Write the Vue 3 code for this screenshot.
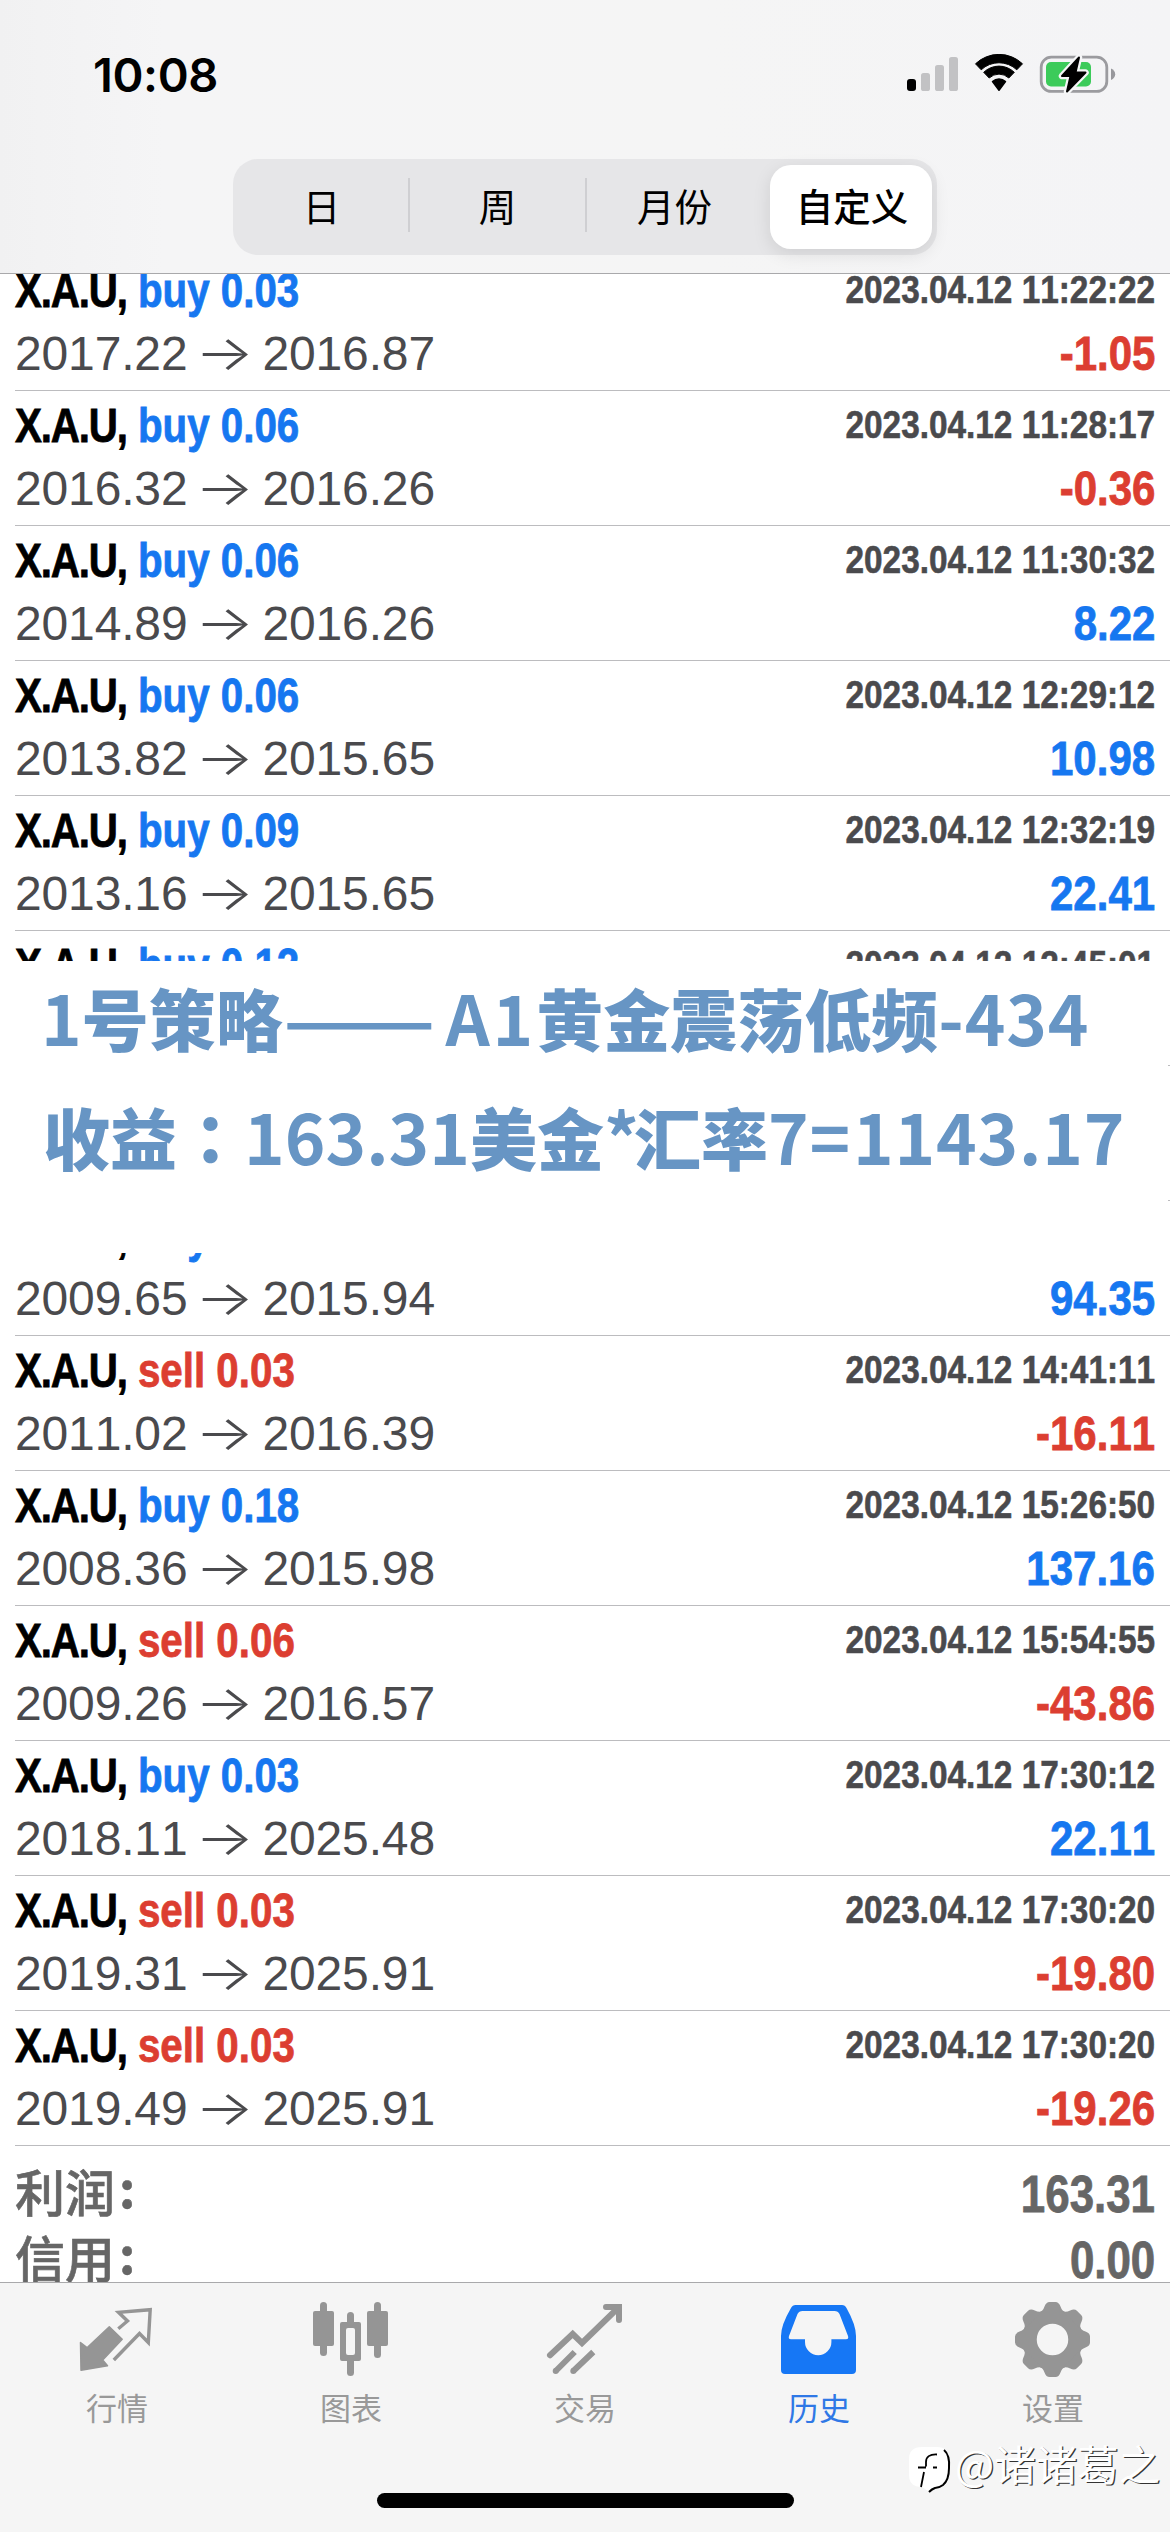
<script setup>
const periods = ['日', '周', '月份', '自定义']
const activePeriod = 3

const deals = [
  { side: 'buy', lot: '0.03', from: '2017.22', to: '2016.87', time: '2023.04.12 11:22:22', profit: '-1.05' },
  { side: 'buy', lot: '0.06', from: '2016.32', to: '2016.26', time: '2023.04.12 11:28:17', profit: '-0.36' },
  { side: 'buy', lot: '0.06', from: '2014.89', to: '2016.26', time: '2023.04.12 11:30:32', profit: '8.22' },
  { side: 'buy', lot: '0.06', from: '2013.82', to: '2015.65', time: '2023.04.12 12:29:12', profit: '10.98' },
  { side: 'buy', lot: '0.09', from: '2013.16', to: '2015.65', time: '2023.04.12 12:32:19', profit: '22.41' },
  { side: 'buy', lot: '0.12', time: '2023.04.12 12:45:01' },
  {},
  { side: 'buy', from: '2009.65', to: '2015.94', profit: '94.35' },
  { side: 'sell', lot: '0.03', from: '2011.02', to: '2016.39', time: '2023.04.12 14:41:11', profit: '-16.11' },
  { side: 'buy', lot: '0.18', from: '2008.36', to: '2015.98', time: '2023.04.12 15:26:50', profit: '137.16' },
  { side: 'sell', lot: '0.06', from: '2009.26', to: '2016.57', time: '2023.04.12 15:54:55', profit: '-43.86' },
  { side: 'buy', lot: '0.03', from: '2018.11', to: '2025.48', time: '2023.04.12 17:30:12', profit: '22.11' },
  { side: 'sell', lot: '0.03', from: '2019.31', to: '2025.91', time: '2023.04.12 17:30:20', profit: '-19.80' },
  { side: 'sell', lot: '0.03', from: '2019.49', to: '2025.91', time: '2023.04.12 17:30:20', profit: '-19.26' },
]

const totals = [
  { label: '利润', value: '163.31' },
  { label: '信用', value: '0.00' },
]

const teeth = [0, 45, 90, 135, 180, 225, 270, 315]
</script>

<template>
  <div class="screen">
    <header class="header">
      <div class="status">
        <span class="clock">10:08</span>
        <svg class="status-icons" width="212" height="40" viewBox="0 0 212 40">
          <rect x="1" y="25" width="9" height="12" rx="3" fill="#000" />
          <rect x="15" y="19" width="9" height="18" rx="2.6" fill="#c2c2c4" />
          <rect x="29" y="11" width="9" height="26" rx="2.6" fill="#c2c2c4" />
          <rect x="43" y="3" width="9" height="34" rx="2.6" fill="#c2c2c4" />
          <path d="M69.500 9.800a34 34 0 0 1 47 0l-5.700 6a26 26 0 0 0-35.600 0z" fill="#000" stroke="#000" stroke-width="1" stroke-linejoin="round" />
          <path d="M77.700 18.300a22 22 0 0 1 30.600 0l-5.500 5.700a14.300 14.300 0 0 0-19.600 0z" fill="#000" stroke="#000" stroke-width="1" stroke-linejoin="round" />
          <path d="M86.500 27.500a10 10 0 0 1 13 0l-6.500 8.800z" fill="#000" stroke="#000" stroke-width="1.500" stroke-linejoin="round" />
          <rect x="135.200" y="3.200" width="65.600" height="34.200" rx="10" fill="none" stroke="#9b9b9f" stroke-width="2.800" />
          <path d="M205 14.500q4.200 2 4.200 5.800t-4.200 5.800z" fill="#98989c" />
          <rect x="140" y="8" width="45" height="24.500" rx="5" fill="#3ccb5a" />
          <path d="M173 3.500L156 22h8.500l-3.500 15.500L179.500 18.500H169.500z" fill="#000" stroke="#f6f7f8" stroke-width="6.500" stroke-linejoin="round" />
          <path d="M173 3.500L156 22h8.500l-3.500 15.500L179.500 18.500H169.500z" fill="#000" stroke="#000" stroke-width="2" stroke-linejoin="round" />
        </svg>
      </div>
      <nav class="segments">
        <button v-for="(p, i) in periods" :key="p" class="segment" :class="{ active: i === activePeriod }">
          <span>{{ p }}</span>
        </button>
      </nav>
    </header>

    <main class="history">
      <ul class="deals">
        <li v-for="(d, i) in deals" :key="i" class="deal">
          <div class="line top">
            <span v-if="d.side" class="title"><span class="symbol">X.A.U,</span> <span :class="d.side">{{ d.side }} {{ d.lot }}</span></span>
            <span v-if="d.time" class="time">{{ d.time }}</span>
          </div>
          <div v-if="d.from" class="line bottom">
            <span class="prices">{{ d.from }}<span class="arrow">→</span>{{ d.to }}</span>
            <span class="profit" :class="d.profit.startsWith('-') ? 'loss' : 'gain'">{{ d.profit }}</span>
          </div>
        </li>
      </ul>
      <dl class="totals">
        <div v-for="t in totals" :key="t.label" class="total">
          <dt>{{ t.label }}<span class="colon">:</span></dt>
          <dd>{{ t.value }}</dd>
        </div>
      </dl>
      <div class="note">
        <p>1<b>号策略</b><i>——</i> <span class="code">A1</span><b>黄金震荡低频</b><span class="number">-434</span></p>
        <p class="income"><b>收益<span class="wide-colon">：</span></b>163.31<b>美金</b><span class="times">*</span><b>汇率</b><span class="number">7<span class="equals">=</span>1143.17</span></p>
      </div>
    </main>

    <footer class="tabbar">
      <div class="tabs">
        <div class="tab">
          <svg width="90" height="90" viewBox="0 0 90 90">
            <path d="M8.500 52.500L15 57.700 37.300 36.800 50.200 49.300 30.700 70 35.500 75.800 9 80.200z" fill="#959595" stroke="#959595" stroke-width="1.500" stroke-linejoin="round" />
            <path d="M46.300 38.700L55.500 31 46.500 22.300 78.200 19.700 76.300 52.500 67.500 43.500 41.800 70" fill="none" stroke="#959595" stroke-width="3.400" />
          </svg>
          <span>行情</span>
        </div>
        <div class="tab">
          <svg width="90" height="90" viewBox="0 0 90 90" fill="#959595">
            <rect x="7" y="21" width="21" height="35" rx="2" />
            <rect x="14" y="12" width="7" height="54" rx="3.500" />
            <path fill-rule="evenodd" d="M36 32H53q2 0 2 2V69q0 2-2 2H36q-2 0-2-2V34q0-2 2-2zM42 38q-2 0-2 2V63q0 2 2 2h5q2 0 2-2V40q0-2-2-2z" />
            <rect x="41" y="22" width="7" height="14" rx="3.500" />
            <rect x="41" y="67" width="7" height="19" rx="3.500" />
            <rect x="61" y="21" width="21" height="35" rx="2" />
            <rect x="68" y="12" width="7" height="56" rx="3.500" />
          </svg>
          <span>图表</span>
        </div>
        <div class="tab">
          <svg width="90" height="90" viewBox="0 0 90 90" fill="none" stroke="#959595" stroke-width="6">
            <path d="M10 65.300L32.700 44 42 53 78.500 17.500" stroke-linecap="round" />
            <path d="M66 17H79V30" stroke-linecap="round" />
            <path d="M15.700 81L34.700 62M33.300 81L53.300 62" />
            <path d="M15.700 81h0M33.300 81h0" stroke-linecap="round" />
          </svg>
          <span>交易</span>
        </div>
        <div class="tab current">
          <svg width="90" height="90" viewBox="0 0 90 90" fill="#1677f5">
            <path fill-rule="evenodd" d="M21.500 15H68q3 0 4.500 3Q82 35 82 46V80q0 4-4 4H11q-4 0-4-4V46Q7 35 17 18q1.500-3 4.500-3zM28.500 21q-3.500 0-5 3L15 46q-1 3.300 2 3.300H31V52a13.200 13.200 0 0 0 26.400 0V49.300H72q3 0 2-3.300L65.500 24q-1.500-3-5-3z" />
          </svg>
          <span>历史</span>
        </div>
        <div class="tab">
          <svg width="90" height="90" viewBox="0 0 90 90">
            <g transform="translate(44.500 49.500)" fill="#959595">
              <circle r="23" fill="none" stroke="#959595" stroke-width="14.500" />
              <path v-for="a in teeth" :key="a" :transform="`rotate(${a})`" d="M-13-27Q-9.500-28.500-8-33-6.300-37.500-3-37.500H3Q6.300-37.500 8-33 9.500-28.500 13-27z" />
            </g>
          </svg>
          <span>设置</span>
        </div>
      </div>
      <div class="home"></div>
      <div class="watermark">
        <svg width="47" height="50" viewBox="0 0 47 50">
          <path d="M14 1H29Q41 1 41 13V30Q41 41 29 41 24 41 20 45L14 41Q1 41 1 29V13Q1 1 14 1z" fill="#fff" />
          <path d="M36 4Q42 9 41 22 41 34 35 39 31 42 27 42 24 43 21 46" fill="none" stroke="#000" stroke-width="2" />
          <path d="M29 8.500Q18 8 18 16V20.500M18 21.500H10M16 26L13 41M25 21.500H29" fill="none" stroke="#000" stroke-width="1.800" />
        </svg>
        <span>@诸诸葛之</span>
      </div>
    </footer>
  </div>
</template>

<style>
body {
  background: #fff;
}
</style>

<style scoped>
.screen {
  width: 1170px;
  height: 2532px;
  display: flex;
  flex-direction: column;
  overflow: hidden;
  background: #fff;
  font-family: "Liberation Sans", "Noto Sans CJK SC", sans-serif;
}
.header {
  height: 274px;
  box-sizing: border-box;
  border-bottom: 1px solid #a9a9ab;
  background: linear-gradient(90deg, #f1f1f2 0, #f5f5f6 14%, #f5f5f5 60%, #f4f4f6 100%);
}
.status {
  display: flex;
  justify-content: space-between;
  padding: 54px 52px 0 93px;
  height: 105px;
  box-sizing: border-box;
}
.clock {
  font: 600 47px/41px Inter, sans-serif;
  letter-spacing: -0.4px;
}
.segments {
  display: grid;
  grid-template-columns: 175px 177px 177px 175px;
  width: 704px;
  height: 96px;
  margin: 54px auto 0;
  border-radius: 25px;
  background: #e6e6e8;
}
.segment {
  display: flex;
  align-items: center;
  padding: 0 0 4px;
  border: 0;
  background: none;
  color: #000;
  font: 400 37.500px/54px "Noto Sans CJK SC", sans-serif;
}
.segment span {
  flex: 1;
  border-left: 2px solid transparent;
}
.segment:nth-child(2) span,
.segment:nth-child(3) span {
  border-left-color: #cfcfd2;
}
.segment.active {
  margin: 6px 5px 6px 8px;
  border-radius: 21px;
  background: #fff;
  box-shadow: 0 5px 18px rgba(0, 0, 0, 0.1);
  font-weight: 500;
}
.history {
  position: relative;
  height: 2008px;
  overflow: hidden;
}
.deals {
  list-style: none;
  margin: -18px 0 0;
  padding: 0 0 0 15px;
}
.deal {
  height: 135px;
  box-sizing: border-box;
  border-bottom: 1px solid #bcbcbf;
  padding-right: 15px;
}
.line {
  display: flex;
  justify-content: space-between;
  white-space: nowrap;
}
.top {
  height: 68px;
}
.title {
  font-weight: 700;
  font-size: 48px;
  line-height: 70px;
  transform: scaleX(0.84);
  transform-origin: left;
  color: #000;
  -webkit-text-stroke: 0.8px currentColor;
}
.symbol {
  letter-spacing: -1.400px;
}
.time {
  margin-left: auto;
  font-weight: 700;
  font-size: 39px;
  line-height: 67px;
  transform: scaleX(0.855);
  transform-origin: right;
  color: #4a4a4d;
  font-kerning: none;
  -webkit-text-stroke: 0.6px currentColor;
}
.prices {
  font-size: 48px;
  line-height: 59px;
  letter-spacing: -0.150px;
  font-kerning: none;
  color: #4a4a4d;
}
.arrow {
  display: inline-block;
  width: 75px;
  text-align: center;
  font-family: Inter, sans-serif;
  font-weight: 300;
  line-height: 50px;
  transform: scaleX(1.29);
}
.profit {
  font-weight: 700;
  font-size: 48px;
  line-height: 59px;
  transform: scaleX(0.875);
  transform-origin: right;
  font-kerning: none;
  -webkit-text-stroke: 0.8px currentColor;
}
.buy,
.gain {
  color: #1677f0;
}
.sell,
.loss {
  color: #dc3e31;
}
.totals {
  margin: 0;
  padding: 14px 15px 0;
}
.total {
  display: flex;
  justify-content: space-between;
  height: 66px;
  color: #666;
}
.total dt {
  font: 500 50px/61px "Noto Sans CJK SC", sans-serif;
  -webkit-text-stroke: 0.6px currentColor;
}
.colon {
  position: relative;
  left: 4px;
  top: -4px;
  font-weight: 700;
}
.total dd {
  margin: 0;
  font-weight: 700;
  font-size: 51px;
  line-height: 70px;
  transform: scaleX(0.86);
  transform-origin: right;
  font-kerning: none;
  -webkit-text-stroke: 0.8px currentColor;
}
.note {
  position: absolute;
  left: 0;
  top: 687px;
  width: 1168px;
  height: 292px;
  background: #fff;
  color: #6795c4;
}
.note p {
  margin: 0;
  padding-left: 41px;
  height: 118.500px;
  font: 700 69px/111px "Noto Sans CJK SC", sans-serif;
  white-space: nowrap;
}
.note b {
  font-size: 67px;
  line-height: 100px;
}
.note .income {
  padding-left: 43px;
}
.note i {
  display: inline-block;
  width: 147px;
  font-style: normal;
  line-height: 100px;
  transform: scaleX(1.3);
  transform-origin: left;
}
.code {
  letter-spacing: 3px;
}
.number {
  letter-spacing: 0.8px;
}
.times {
  margin-right: -5px;
}
.equals {
  margin-right: 2px;
}
.wide-colon {
  font-family: "Noto Sans CJK TC", sans-serif;
}
.tabbar {
  position: relative;
  flex: 1;
  border-top: 1px solid #a9a9ab;
  background: #f5f5f5;
}
.tabs {
  display: flex;
  padding-top: 7px;
}
.tab {
  flex: 1;
  display: flex;
  flex-direction: column;
  align-items: center;
  color: #999;
  font: 400 31px/40px "Noto Sans CJK SC", sans-serif;
}
.tab span {
  margin-top: 7px;
}
.tab.current {
  color: #2f78e6;
}
.home {
  width: 417px;
  height: 15px;
  margin: 66px auto 0;
  border-radius: 8px;
  background: #000;
}
.watermark {
  position: absolute;
  left: 908px;
  top: 163px;
  display: flex;
  color: #fff;
  font: 400 41.500px/34px "Noto Sans CJK SC", sans-serif;
  text-shadow: 1.200px 1.200px 0 #333;
  white-space: nowrap;
}
</style>
